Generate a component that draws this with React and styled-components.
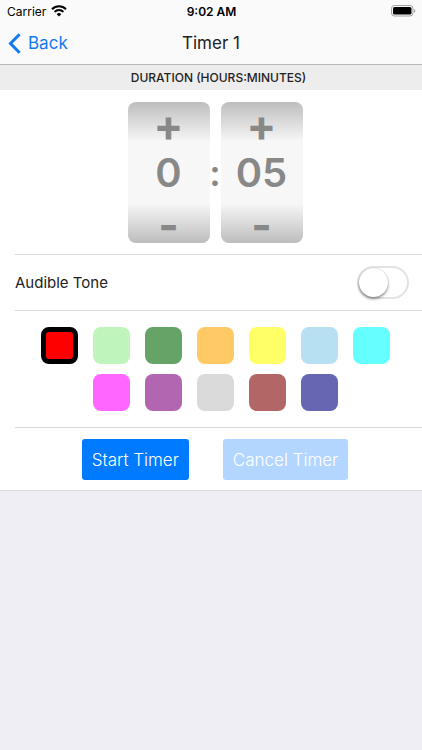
import React, { useState } from 'react'
import styled, { createGlobalStyle } from 'styled-components'

const GlobalStyle = createGlobalStyle`
  * {
    box-sizing: border-box;
  }
  body {
    margin: 0;
    background-color: #EFEEF4;
    font-family: Inter, "Liberation Sans", sans-serif;
    color: #222;
  }
  button {
    font-family: inherit;
    border: none;
    padding: 0;
    cursor: pointer;
  }
`

const StyledHeader = styled.header`
  background-color: #FAFAFA;
  border-bottom: 1px solid #B8B8BA;
`

const StyledStatusBar = styled.div`
  display: grid;
  grid-template-columns: 1fr auto 1fr;
  align-items: center;
  height: 22px;
  padding: 0 6px 0 7px;
  font-size: 12px;
  color: black;
`

const StyledCarrier = styled.div`
  display: flex;
  align-items: center;
  gap: 5px;
`

const StyledClock = styled.div`
  font-weight: 600;
`

const StyledBattery = styled.svg`
  justify-self: end;
`

const StyledNavBar = styled.nav`
  display: grid;
  grid-template-columns: 1fr auto 1fr;
  align-items: center;
  height: 42px;
  padding: 0 8px;
`

const StyledBackLink = styled.a`
  display: flex;
  align-items: center;
  gap: 7px;
  color: #1279F5;
  font-size: 17px;
  text-decoration: none;
`

const StyledTitle = styled.h1`
  margin: 0;
  font-size: 17px;
  font-weight: 400;
`

const StyledPanel = styled.main`
  background-color: white;
  border-bottom: 1px solid #D9D9DC;
`

const StyledSectionTitle = styled.h2`
  display: flex;
  align-items: center;
  justify-content: center;
  height: 25px;
  margin: 0;
  padding-left: 15px;
  background-color: #EDEDED;
  font-size: 12px;
  font-weight: 500;
`

const StyledSection = styled.section`
  display: flex;
  justify-content: center;
  margin-left: 15px;
  padding: ${({ $space }) => $space}px 7px ${({ $space }) => $space}px 0;
  border-bottom: 1px solid #D9D9D9;
  :last-child& {
    border-bottom: none;
  }
`

const StyledDuration = styled(StyledSection)`
  align-items: center;
  padding-bottom: 11px;
`

const StyledWheel = styled.div`
  display: flex;
  flex-direction: column;
  width: 82px;
  height: 141px;
  border-radius: 8px;
  background-image: linear-gradient(#BDBDBD, #F7F7F7 28%, #F7F7F7 72%, #BDBDBD);
  color: #888;
  font-weight: 600;
`

const StyledWheelButton = styled.button`
  flex: none;
  height: ${({ $height }) => $height}px;
  background: none;
  color: inherit;
  font-size: 44px;
  font-weight: 700;
  line-height: ${({ $height }) => $height}px;
`

const StyledWheelValue = styled.output`
  flex: 1;
  font-size: 40px;
  line-height: 50px;
  text-align: center;
`

const StyledColon = styled.div`
  width: 11px;
  display: flex;
  justify-content: center;
  color: #888;
  font-size: 36px;
  font-weight: 600;
`

const StyledToneRow = styled(StyledSection)`
  justify-content: space-between;
  align-items: center;
  padding-right: 13px;
  height: 56px;
  font-size: 15px;
`

const StyledSwitch = styled.input`
  appearance: none;
  display: flex;
  width: 52px;
  height: 33px;
  margin: 0;
  border: 2px solid #E3E3E3;
  border-radius: 17px;
  background-color: white;
  cursor: pointer;
  &::before {
    content: "";
    width: 29px;
    height: 29px;
    border-radius: 50%;
    background-color: white;
    box-shadow: 0 2px 3px rgba(0, 0, 0, 0.4), 0 0 1px rgba(0, 0, 0, 0.3);
  }
  &:checked {
    justify-content: flex-end;
    border-color: #4CD964;
    background-color: #4CD964;
  }
`

const StyledColors = styled(StyledSection)`
  flex-wrap: wrap;
  gap: 10px 15px;
  padding-left: 15px;
  padding-right: 22px;
`

const StyledSwatch = styled.input`
  appearance: none;
  width: 37px;
  height: 37px;
  margin: 0;
  border-radius: 8px;
  background-color: ${({ $color }) => $color};
  cursor: pointer;
  &:checked {
    border: 5px solid black;
  }
`

const StyledActions = styled(StyledSection)`
  gap: 34px;
  padding-bottom: 10px;
`

const StyledActionButton = styled.button`
  height: 41px;
  padding: 0 10px;
  border-radius: 3px;
  background-color: #007AFF;
  color: white;
  font-size: 17px;
  font-weight: 300;
  white-space: nowrap;
  &:disabled {
    background-color: #B2D6FF;
    cursor: default;
  }
`

const colors = [
  { name: 'Red', value: '#FF0000' },
  { name: 'Light green', value: '#BFF5BD' },
  { name: 'Green', value: '#66A366' },
  { name: 'Orange', value: '#FFC966' },
  { name: 'Yellow', value: '#FFFF66' },
  { name: 'Light blue', value: '#B7E0F2' },
  { name: 'Cyan', value: '#66FFFF' },
  { name: 'Magenta', value: '#FF66FF' },
  { name: 'Purple', value: '#B266B2' },
  { name: 'Gray', value: '#DADADA' },
  { name: 'Brown', value: '#B26666' },
  { name: 'Navy', value: '#6666B2' }
]

const WifiIcon = () => (
  <svg width="16" height="12" viewBox="0 0 16 12" fill="none" stroke="black" strokeWidth="2" aria-hidden="true">
    <path d="M1 4.2a10 10 0 0 1 14 0" />
    <path d="M3.6 6.9a6.2 6.2 0 0 1 8.8 0" />
    <path d="M8 11.6 5.7 9.3a3.2 3.2 0 0 1 4.6 0z" fill="black" stroke="none" />
  </svg>
)

const BatteryIcon = () => (
  <StyledBattery width="25" height="12" viewBox="0 0 25 12" aria-hidden="true">
    <rect x="0.5" y="0.5" width="21.5" height="10.5" rx="3" fill="none" stroke="#A0A0A0" />
    <rect x="2" y="2" width="18.5" height="7.5" rx="1.6" fill="black" />
    <path d="M23.2 4v3.8c1.6-.6 1.6-3.2 0-3.8z" fill="#A0A0A0" />
  </StyledBattery>
)

const BackIcon = () => (
  <svg width="13" height="21" viewBox="0 0 13 21" fill="none" stroke="#1279F5" strokeWidth="3" aria-hidden="true">
    <path d="M11.6 1.2 2.5 10.5l9.1 9.3" />
  </svg>
)

const Wheel = (props) => {
  const {
    label,
    value,
    digits,
    max,
    onChange
  } = props

  return (
    <StyledWheel role="group" aria-label={label}>
      <StyledWheelButton $height={46} aria-label={`More ${label}`} onClick={() => onChange(Math.min(value + 1, max))}>
        +
      </StyledWheelButton>
      <StyledWheelValue>{String(value).padStart(digits, '0')}</StyledWheelValue>
      <StyledWheelButton $height={36} aria-label={`Fewer ${label}`} onClick={() => onChange(Math.max(value - 1, 0))}>
        -
      </StyledWheelButton>
    </StyledWheel>
  )
}

const Header = () => {
  return (
    <StyledHeader>
      <StyledStatusBar>
        <StyledCarrier>
          Carrier
          <WifiIcon />
        </StyledCarrier>
        <StyledClock>9:02 AM</StyledClock>
        <BatteryIcon />
      </StyledStatusBar>
      <StyledNavBar>
        <StyledBackLink href="#timers">
          <BackIcon />
          Back
        </StyledBackLink>
        <StyledTitle>Timer 1</StyledTitle>
      </StyledNavBar>
    </StyledHeader>
  )
}

const App = () => {
  const [hours, setHours] = useState(0)
  const [minutes, setMinutes] = useState(5)
  const [tone, setTone] = useState(false)
  const [color, setColor] = useState('Red')
  const [running, setRunning] = useState(false)

  return (
    <>
      <GlobalStyle />
      <Header />
      <StyledPanel>
        <StyledSectionTitle>DURATION (HOURS:MINUTES)</StyledSectionTitle>
        <StyledDuration $space={12}>
          <Wheel label="hours" value={hours} digits={1} max={23} onChange={setHours} />
          <StyledColon>:</StyledColon>
          <Wheel label="minutes" value={minutes} digits={2} max={59} onChange={setMinutes} />
        </StyledDuration>
        <StyledToneRow $space={0}>
          <label htmlFor="tone">Audible Tone</label>
          <StyledSwitch
            id="tone"
            type="checkbox"
            role="switch"
            checked={tone}
            onChange={(e) => setTone(e.target.checked)}
          />
        </StyledToneRow>
        <StyledColors $space={16} role="radiogroup" aria-label="Color">
          {colors.map(({ name, value }) => {
            return (
              <StyledSwatch
                key={name}
                type="radio"
                name="color"
                aria-label={name}
                $color={value}
                checked={color === name}
                onChange={() => setColor(name)}
              />
            )
          })}
        </StyledColors>
        <StyledActions $space={11}>
          <StyledActionButton disabled={running} onClick={() => setRunning(true)}>Start Timer</StyledActionButton>
          <StyledActionButton disabled={!running} onClick={() => setRunning(false)}>Cancel Timer</StyledActionButton>
        </StyledActions>
      </StyledPanel>
    </>
  )
}

export default App
